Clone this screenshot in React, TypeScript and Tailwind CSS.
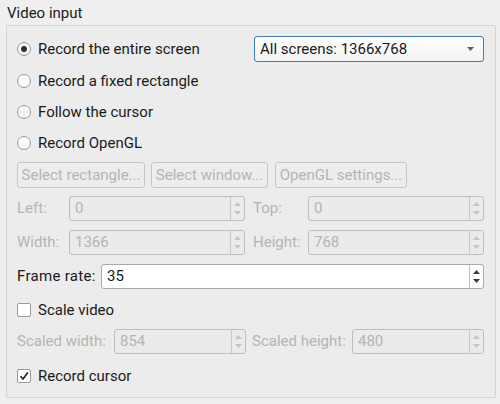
import type { ReactNode } from 'react';

const font = { fontFamily: 'Roboto, "Noto Sans", sans-serif' };

function Radio({ checked, label }: { checked?: boolean; label: string }) {
  return (
    <div className="flex items-center gap-[7px]">
      <span className="w-[14px] h-[14px] rounded-full border border-[#9a9a9a] bg-gradient-to-b from-white to-[#f3f3f3] flex items-center justify-center">
        {checked && <span className="w-[6px] h-[6px] rounded-full bg-[#2e2e2e]" />}
      </span>
      <span className="text-[#1a1a1a]">{label}</span>
    </div>
  );
}

function Check({ checked, label }: { checked?: boolean; label: string }) {
  return (
    <div className="flex items-center gap-[7px]">
      <span className="w-[14px] h-[14px] rounded-[2px] border border-[#9a9a9a] bg-white flex items-center justify-center">
        {checked && (
          <svg width="10" height="10" viewBox="0 0 10 10">
            <path d="M1.5 5.2 L4 8 L8.8 1.5" fill="none" stroke="#1e1e1e" strokeWidth="1.6" />
          </svg>
        )}
      </span>
      <span className="text-[#1a1a1a]">{label}</span>
    </div>
  );
}

function SpinArrows({ disabled }: { disabled?: boolean }) {
  const c = disabled ? '#c4c4c4' : '#3a3a3a';
  return (
    <span
      className={`w-[14px] h-full flex flex-col items-center justify-center gap-[5px] border-l ${
        disabled ? 'border-[#c8c8c8]' : 'border-[#c0c0c0]'
      }`}
    >
      <svg width="7" height="4" viewBox="0 0 7 4">
        <path d="M0 4 L3.5 0 L7 4 Z" fill={c} />
      </svg>
      <svg width="7" height="4" viewBox="0 0 7 4">
        <path d="M0 0 L3.5 4 L7 0 Z" fill={c} />
      </svg>
    </span>
  );
}

function Spin({ value, disabled, className }: { value: string; disabled?: boolean; className: string }) {
  return (
    <div
      className={`${className} h-[25px] flex rounded-[3px] border ${
        disabled ? 'border-[#bdbdbd] bg-[#ebebeb] text-[#b4b4b4]' : 'border-[#a9a9a9] bg-white text-[#1a1a1a]'
      }`}
    >
      <span className="flex-1 flex items-center pl-[5px]">{value}</span>
      <SpinArrows disabled={disabled} />
    </div>
  );
}

function Btn({ children, className }: { children: ReactNode; className: string }) {
  return (
    <div
      className={`${className} h-[26px] flex items-center justify-center rounded-[3px] border border-[#c6c6c6] bg-[#ededed] text-[#b4b4b4]`}
    >
      {children}
    </div>
  );
}

export default function App() {
  return (
    <div className="w-[500px] h-[404px] bg-[#efefef] text-[15px] leading-none overflow-hidden" style={font}>
      <div className="pl-[7px] pt-[6px] h-[25px] text-[#1a1a1a]">Video input</div>
      <div className="mx-[6px] w-[490px] h-[373px] border border-[#d3d3d3] rounded-[2px] bg-[#ececec] pl-[10px] pr-[11px] pt-[10px]">
        <div className="flex h-[26px] items-center">
          <div className="flex-1">
            <Radio checked label="Record the entire screen" />
          </div>
          <div className="w-[230px] h-[26px] rounded-[3px] border border-[#3e7dbd] bg-gradient-to-b from-white to-[#f2f2f2] flex items-center pl-[5px] pr-[9px] text-[#1a1a1a]">
            <span className="flex-1">All screens: 1366x768</span>
            <svg width="7" height="4" viewBox="0 0 7 4">
              <path d="M0 0 L3.5 4 L7 0 Z" fill="#5e5e5e" />
            </svg>
          </div>
        </div>
        <div className="mt-[6px] h-[26px] flex items-center">
          <Radio label="Record a fixed rectangle" />
        </div>
        <div className="mt-[5px] h-[26px] flex items-center">
          <Radio label="Follow the cursor" />
        </div>
        <div className="mt-[5px] h-[26px] flex items-center">
          <Radio label="Record OpenGL" />
        </div>
        <div className="mt-[6px] flex">
          <Btn className="w-[128px]">Select rectangle...</Btn>
          <Btn className="w-[117px] ml-[6px]">Select window...</Btn>
          <Btn className="w-[132px] ml-[7px]">OpenGL settings...</Btn>
        </div>
        <div className="mt-[8px] flex items-center text-[#b4b4b4]">
          <span className="w-[52px]">Left:</span>
          <Spin className="w-[176px]" value="0" disabled />
          <span className="w-[55px] ml-[8px]">Top:</span>
          <Spin className="w-[176px]" value="0" disabled />
        </div>
        <div className="mt-[9px] flex items-center text-[#b4b4b4]">
          <span className="w-[52px]">Width:</span>
          <Spin className="w-[176px]" value="1366" disabled />
          <span className="w-[55px] ml-[8px]">Height:</span>
          <Spin className="w-[176px]" value="768" disabled />
        </div>
        <div className="mt-[9px] flex items-center">
          <span className="w-[84px] text-[#1a1a1a] tracking-[0.3px]">Frame rate:</span>
          <Spin className="w-[383px]" value="35" />
        </div>
        <div className="mt-[9px] h-[24px] flex items-center">
          <Check label="Scale video" />
        </div>
        <div className="mt-[7px] flex items-center text-[#b4b4b4]">
          <span className="w-[97px]">Scaled width:</span>
          <Spin className="w-[132px]" value="854" disabled />
          <span className="w-[100px] ml-[6px]">Scaled height:</span>
          <Spin className="w-[132px]" value="480" disabled />
        </div>
        <div className="mt-[10px] h-[24px] flex items-center">
          <Check checked label="Record cursor" />
        </div>
      </div>
    </div>
  );
}
